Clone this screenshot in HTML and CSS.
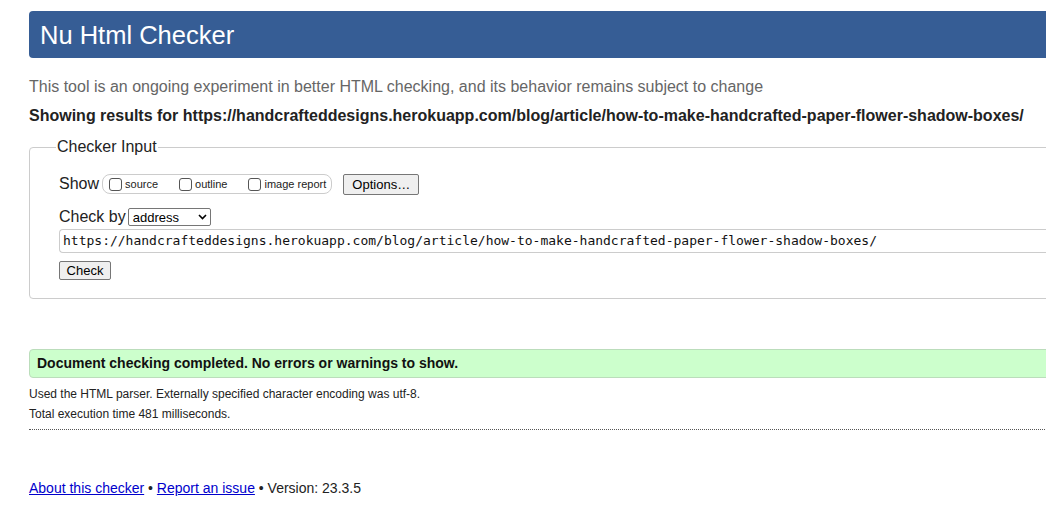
FILE: index.html
```html
<!DOCTYPE html>
<html>
<head>
<meta charset="utf-8">
<title>Nu Html Checker</title>
<link rel="stylesheet" href="styles.css">
</head>
<body>
<div class="page">
  <h1 class="header">Nu Html Checker</h1>
  <p class="tagline">This tool is an ongoing experiment in better HTML checking, and its behavior remains subject to change</p>
  <p class="showing">Showing results for https://handcrafteddesigns.herokuapp.com/blog/article/how-to-make-handcrafted-paper-flower-shadow-boxes/</p>
  <fieldset class="input">
    <legend>Checker Input</legend>
    <div class="row show-row">
      <span class="label">Show</span>
      <span class="opts">
        <label class="opt"><span class="cb"></span>source</label>
        <label class="opt"><span class="cb"></span>outline</label>
        <label class="opt"><span class="cb"></span>image report</label>
      </span>
      <span class="btn options">Options…</span>
    </div>
    <div class="row by-row">
      <span class="label">Check by</span>
      <span class="select">address<svg width="9" height="6" viewBox="0 0 9 6"><path d="M1 1 L4.5 4.5 L8 1" fill="none" stroke="#000" stroke-width="1.6"/></svg></span>
    </div>
    <div class="url">https://handcrafteddesigns.herokuapp.com/blog/article/how-to-make-handcrafted-paper-flower-shadow-boxes/</div>
    <span class="btn check">Check</span>
  </fieldset>
  <div class="success">Document checking completed. No errors or warnings to show.</div>
  <p class="meta first">Used the HTML parser. Externally specified character encoding was utf-8.</p>
  <p class="meta">Total execution time 481 milliseconds.</p>
  <div class="dots"></div>
  <p class="footer"><a href="#">About this checker</a> • <a href="#">Report an issue</a> • Version: 23.3.5</p>
</div>
</body>
</html>
```

FILE: styles.css
```css
html { overflow: hidden; }
body {
  margin: 0;
  font-family: "Liberation Sans", Arial, sans-serif;
  color: #222;
  background: #fff;
}
.page {
  width: 1100px;
  padding: 11px 0 0 29px;
}
.header {
  margin: 0;
  height: 47px;
  background: #365d95;
  color: #fff;
  font-weight: normal;
  font-size: 25.5px;
  line-height: 49px;
  padding-left: 11px;
  border-radius: 4px;
}
.tagline {
  margin: 19px 0 0;
  font-size: 16px;
  line-height: 20px;
  color: #666;
}
.showing {
  margin: 9px 0 0;
  font-size: 16px;
  line-height: 20px;
  font-weight: bold;
  color: #222;
}
.input {
  margin: 12px 0 0;
  padding: 16px 0 18px 29px;
  border: 1px solid #ccc;
  border-radius: 4px;
}
.input legend {
  font-size: 16px;
  color: #222;
  padding: 0 1px;
  margin-left: -3px;
  line-height: 18px;
}
.row {
  display: flex;
  align-items: center;
  font-size: 16px;
}
.label { color: #222; }
.show-row { height: 24px; }
.opts {
  display: flex;
  align-items: center;
  height: 18px;
  margin-left: 3px;
  border: 1px solid #ccc;
  border-radius: 8px;
  padding: 0 5px 0 6px;
  font-size: 11px;
}
.opt {
  display: flex;
  align-items: center;
  margin-right: 21px;
  color: #222;
}
.opt:last-child { margin-right: 0; }
.cb {
  width: 13px;
  height: 13px;
  border: 1px solid #555;
  border-radius: 3px;
  margin-right: 3px;
  box-sizing: border-box;
}
.btn {
  display: inline-flex;
  align-items: center;
  justify-content: center;
  font-size: 13px;
  color: #000;
  background: #efefef;
  border: 1px solid #767676;
  border-radius: 2px;
  box-sizing: border-box;
}
.options {
  margin-left: 11px;
  width: 76px;
  height: 21px;
}
.by-row {
  margin-top: 12px;
  height: 18px;
}
.select {
  display: inline-flex;
  align-items: center;
  justify-content: space-between;
  width: 83px;
  height: 18px;
  box-sizing: border-box;
  border: 1px solid #767676;
  border-radius: 2px;
  margin-left: 2px;
  padding: 0 3px 0 4px;
  font-size: 13px;
  color: #000;
}
.url {
  margin-top: 3px;
  height: 24px;
  box-sizing: border-box;
  border: 1px solid #ccc;
  border-right: none;
  border-radius: 4px 0 0 4px;
  font-family: "DejaVu Sans Mono", monospace;
  font-size: 13px;
  line-height: 22px;
  padding-left: 3px;
  color: #111;
}
.check {
  margin-top: 8px;
  width: 52px;
  height: 19px;
}
.success {
  margin-top: 50px;
  height: 29px;
  box-sizing: border-box;
  background: #ccffcc;
  border: 1px solid #bbddbb;
  border-radius: 4px;
  padding-left: 7px;
  font-weight: bold;
  font-size: 14px;
  line-height: 27px;
  color: #111;
}
.meta {
  margin: 5px 0 0;
  font-size: 12px;
  line-height: 15px;
  color: #222;
}
.meta.first { margin-top: 9px; }
.dots {
  margin-top: 7px;
  border-top: 1px dotted #555;
}
.footer {
  margin: 50px 0 0;
  font-size: 14px;
  color: #222;
}
.footer a { color: #00c; }
```
